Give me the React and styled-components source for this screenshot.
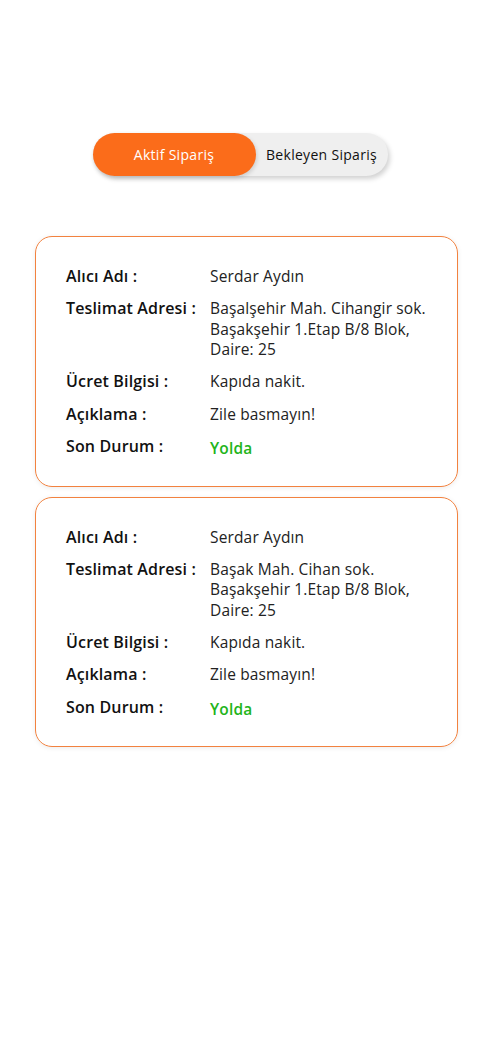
import styled, { createGlobalStyle } from 'styled-components';

const GlobalStyle = createGlobalStyle`
    body {
        margin: 0;
        background: #ffffff;
        font-family: 'Open Sans', 'Noto Sans', sans-serif;
        color: #111111;
    }
`;

const Page = styled.div`
    padding: 133px 22px 40px 35px;
    display: flex;
    flex-direction: column;
`;

const Toggle = styled.div`
    align-self: center;
    margin-left: -13px;
    width: 295px;
    height: 43px;
    display: flex;
    align-items: stretch;
    background: #efefef;
    border-radius: 22px;
    box-shadow: 2px 3px 5px rgba(0, 0, 0, 0.18);
`;

const Tab = styled.button`
    border: none;
    padding: 0;
    font-family: inherit;
    font-size: 14px;
    letter-spacing: 0.3px;
    cursor: pointer;
    border-radius: 22px;
    background: ${(p) => (p.$active ? '#fb6c1a' : 'transparent')};
    color: ${(p) => (p.$active ? '#ffffff' : '#111111')};
    width: ${(p) => (p.$active ? '163px' : 'auto')};
    flex: ${(p) => (p.$active ? 'none' : '1')};
    box-shadow: ${(p) => (p.$active ? '1px 2px 4px rgba(0,0,0,0.15)' : 'none')};
`;

const List = styled.div`
    margin-top: 60px;
    display: flex;
    flex-direction: column;
    gap: 10px;
`;

const Card = styled.div`
    border: 1.6px solid #f2823f;
    border-radius: 17px;
    padding: 29px 20px 27px 30px;
    box-shadow: 0 1px 5px rgba(0, 0, 0, 0.08);
    display: grid;
    grid-template-columns: 144px 1fr;
    row-gap: 11.4px;
`;

const Label = styled.div`
    font-size: 16px;
    font-weight: 600;
    line-height: 21px;
    letter-spacing: 0.15px;
    color: #111111;
`;

const Value = styled.div`
    font-size: 15.5px;
    line-height: 20.5px;
    letter-spacing: 0.15px;
    color: ${(p) => (p.$status ? '#22b41a' : '#222222')};
    font-weight: ${(p) => (p.$status ? 600 : 400)};
    margin-top: ${(p) => (p.$status ? '2px' : '0')};
`;

const orders = [
    {
        address: ['Başalşehir Mah. Cihangir sok.', 'Başakşehir 1.Etap B/8 Blok,', 'Daire: 25'],
    },
    {
        address: ['Başak Mah. Cihan sok.', 'Başakşehir 1.Etap B/8 Blok,', 'Daire: 25'],
    },
];

const App = () => {
    return (
        <Page>
            <GlobalStyle />
            <Toggle>
                <Tab $active>Aktif Sipariş</Tab>
                <Tab>Bekleyen Sipariş</Tab>
            </Toggle>
            <List>
                {orders.map((o, i) => (
                    <Card key={i}>
                        <Label>Alıcı Adı :</Label>
                        <Value>Serdar Aydın</Value>
                        <Label>Teslimat Adresi :</Label>
                        <Value>
                            {o.address.map((line) => (
                                <div key={line}>{line}</div>
                            ))}
                        </Value>
                        <Label>Ücret Bilgisi :</Label>
                        <Value>Kapıda nakit.</Value>
                        <Label>Açıklama :</Label>
                        <Value>Zile basmayın!</Value>
                        <Label>Son Durum :</Label>
                        <Value $status>Yolda</Value>
                    </Card>
                ))}
            </List>
        </Page>
    );
};

export default App;
